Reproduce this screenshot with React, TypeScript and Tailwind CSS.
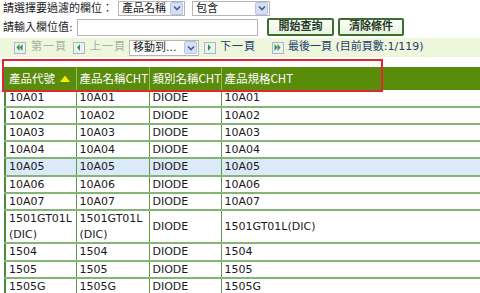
import React from "react";

const FONT = '"DejaVu Sans", "Noto Sans CJK TC", sans-serif';
const CJK = '"Noto Sans CJK TC", "DejaVu Sans", sans-serif';

function DropArrow() {
  return (
    <div className="flex h-[13px] w-[13px] items-center justify-center rounded-[2px] border border-[#b3c6ea] bg-[#d3e0f8]">
      <svg width="8" height="6" viewBox="0 0 8 6">
        <path d="M1 1.5 L4 4.5 L7 1.5" stroke="#4c5f8a" strokeWidth="1.6" fill="none" />
      </svg>
    </div>
  );
}

function FakeSelect({ text, w }: { text: string; w: string }) {
  return (
    <div className={`flex h-[15px] items-center justify-between border border-[#b5b5b5] bg-white pl-[3px] pr-[1px] ${w}`}>
      <span className="leading-none">{text}</span>
      <DropArrow />
    </div>
  );
}

function PagerIcon({ dir, double }: { dir: "l" | "r"; double?: boolean }) {
  const tri = (x: number) =>
    dir === "l" ? `M${x + 3} 2 L${x} 5.5 L${x + 3} 9 Z` : `M${x} 2 L${x + 3} 5.5 L${x} 9 Z`;
  return (
    <svg width="12" height="12" viewBox="0 0 12 12" className="shrink-0">
      <rect x="0.5" y="0.5" width="11" height="11" fill="#eef0f4" stroke="#a9b6c9" />
      {double ? (
        <>
          <path d={tri(2.5)} fill="#2f9a3a" />
          <path d={tri(5.5)} fill="#2f9a3a" />
        </>
      ) : (
        <path d={tri(4)} fill="#2f9a3a" />
      )}
    </svg>
  );
}

type Row = { a: React.ReactNode; b: React.ReactNode; c: string; d: string; hl?: boolean; tall?: boolean };

const rows: Row[] = [
  { a: "10A01", b: "10A01", c: "DIODE", d: "10A01" },
  { a: "10A02", b: "10A02", c: "DIODE", d: "10A02" },
  { a: "10A03", b: "10A03", c: "DIODE", d: "10A03" },
  { a: "10A04", b: "10A04", c: "DIODE", d: "10A04" },
  { a: "10A05", b: "10A05", c: "DIODE", d: "10A05", hl: true },
  { a: "10A06", b: "10A06", c: "DIODE", d: "10A06" },
  { a: "10A07", b: "10A07", c: "DIODE", d: "10A07" },
  {
    a: (
      <>
        1501GT01L
        <br />
        (DIC)
      </>
    ),
    b: (
      <>
        1501GT01L
        <br />
        (DIC)
      </>
    ),
    c: "DIODE",
    d: "1501GT01L(DIC)",
    tall: true,
  },
  { a: "1504", b: "1504", c: "DIODE", d: "1504" },
  { a: "1505", b: "1505", c: "DIODE", d: "1505" },
  { a: "1505G", b: "1505G", c: "DIODE", d: "1505G" },
];

export default function App() {
  const td = "border-r border-[#5e9a4c] px-[3px] py-0 align-middle whitespace-nowrap";
  const th = "border-r border-[#94c35a] px-[3px] py-0 text-left font-normal whitespace-nowrap";
  return (
    <div
      className="relative h-[293px] w-[480px] overflow-hidden bg-white text-[11px] text-[#1a1a1a]"
      style={{ fontFamily: FONT }}
    >
      {/* Row 1 */}
      <div className="flex h-[16px] items-center pl-[3px]">
        <span className="w-[115px] leading-none">請選擇要過濾的欄位：</span>
        <FakeSelect text="產品名稱" w="w-[67px]" />
        <div className="w-[7px]" />
        <FakeSelect text="包含" w="w-[78px]" />
      </div>

      {/* Row 2 */}
      <div className="flex h-[22px] items-center pl-[3px]">
        <span className="w-[74px] leading-none">請輸入欄位值:</span>
        <div className="h-[17px] w-[181px] border border-[#b5b5b5] bg-white" />
        <div className="w-[9px]" />
        <div className="flex h-[18px] w-[67px] items-center justify-center rounded-[2px] border-2 border-[#3c6e2c] bg-gradient-to-b from-white to-[#e8f2de] font-semibold text-[#1e3a1e]">
          開始查詢
        </div>
        <div className="w-[4px]" />
        <div className="flex h-[18px] w-[66px] items-center justify-center rounded-[2px] border-2 border-[#3c6e2c] bg-gradient-to-b from-white to-[#e8f2de] font-semibold text-[#1e3a1e]">
          清除條件
        </div>
      </div>

      {/* Pager */}
      <div className="flex h-[19px] items-center bg-[#eef6dc] pl-[14px]">
        <PagerIcon dir="l" double />
        <span className="ml-[5px] tracking-[1px] text-[#a6b0a6]">第一頁</span>
        <span className="ml-[6px]" />
        <PagerIcon dir="l" />
        <span className="ml-[5px] tracking-[1px] text-[#a6b0a6]">上一頁</span>
        <div className="ml-[3px] flex h-[16px] w-[70px] items-center justify-between border border-[#b5b5b5] bg-white pl-[3px] pr-[1px]">
          <span className="leading-none text-[#222]">移動到...</span>
          <DropArrow />
        </div>
        <span className="ml-[5px]" />
        <PagerIcon dir="r" />
        <span className="ml-[4px] tracking-[1px] text-[#23406e]">下一頁</span>
        <span className="ml-[16px]" />
        <PagerIcon dir="r" double />
        <span className="ml-[4px] text-[#23406e]">最後一頁 (目前頁數:1/119)</span>
      </div>

      {/* Table */}
      <div className="pl-[4px] pt-[10px]">
        <table className="w-[520px] table-fixed border-collapse border-l-2 border-[#4d8a3a]">
          <colgroup>
            <col className="w-[71px]" />
            <col className="w-[73px]" />
            <col className="w-[72px]" />
            <col />
          </colgroup>
          <thead>
            <tr className="h-[23px] bg-[#5a8c0c] text-[11.5px] text-white" style={{ fontFamily: CJK }}>
              <th className={th}>
                <span className="flex items-center">
                  產品代號
                  <svg width="12" height="9" viewBox="0 0 12 9" className="ml-[4px]">
                    <path d="M1 8 L6 1.5 L11 8 Z" fill="#ffe600" />
                  </svg>
                </span>
              </th>
              <th className={th}>產品名稱CHT</th>
              <th className={th}>類別名稱CHT</th>
              <th className="px-[3px] py-0 text-left font-normal whitespace-nowrap">產品規格CHT</th>
            </tr>
          </thead>
          <tbody>
            {rows.map((r, i) => {
              const lh = r.tall ? "leading-[15.5px]" : i % 2 === 0 ? "leading-[15.5px]" : "leading-[15px]";
              return (
                <tr key={i} className={`border-b-2 border-[#84b574] ${r.hl ? "bg-[#dce9f8]" : "bg-white"}`}>
                  <td className={`${td} ${lh}`}>{r.a}</td>
                  <td className={`${td} ${lh}`}>{r.b}</td>
                  <td className={`${td} ${lh}`}>{r.c}</td>
                  <td className={`px-[3px] py-0 align-middle whitespace-nowrap ${lh}`}>{r.d}</td>
                </tr>
              );
            })}
          </tbody>
        </table>
      </div>

      {/* Red annotation box */}
      <div className="pointer-events-none absolute left-[2px] top-[59px] h-[33px] w-[381px] border-2 border-[#e3262b]" />
    </div>
  );
}
